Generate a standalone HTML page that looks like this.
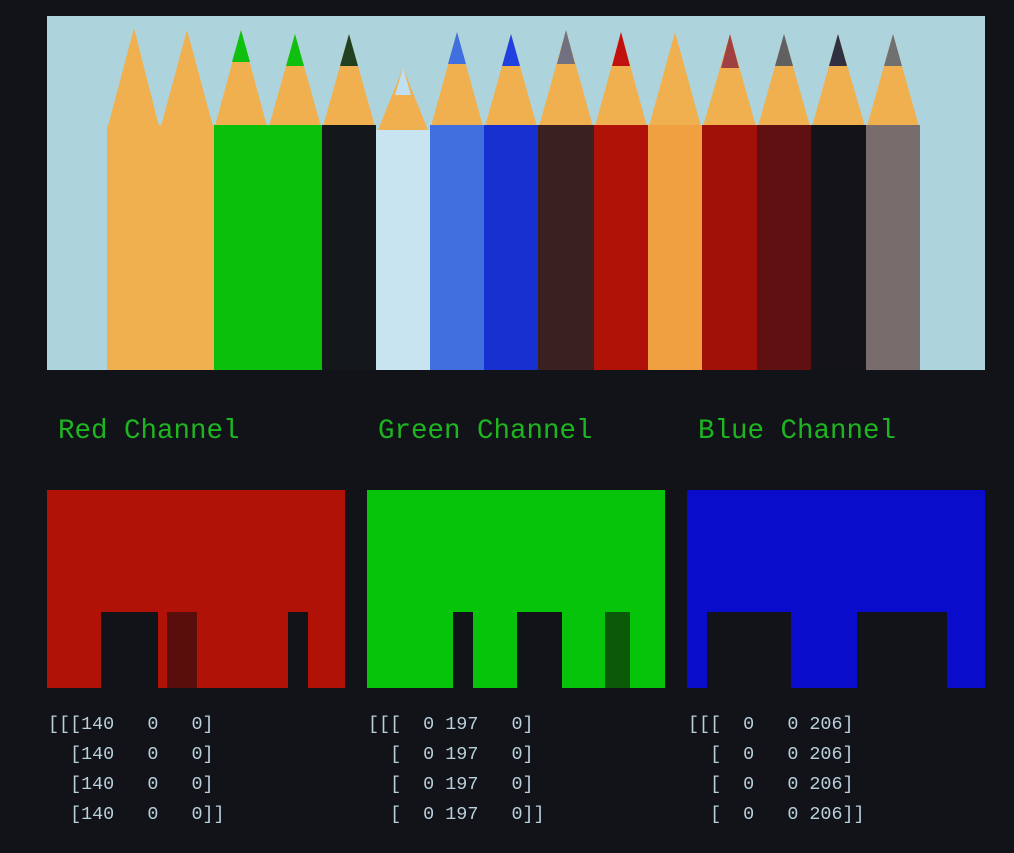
<!DOCTYPE html>
<html><head><style>
body{margin:0;background:#121318;width:1014px;height:853px;overflow:hidden;position:relative;font-family:"Liberation Mono",monospace}
.t{position:absolute;top:412px;color:#1db520;font-size:27.5px;line-height:40px;white-space:pre}
.a{position:absolute;top:710px;color:#b8d0dc;font-size:18.4px;line-height:30px;white-space:pre}
</style></head><body>
<svg style="position:absolute;left:0;top:0" width="1014" height="853">
<rect x="47" y="16" width="938" height="354" fill="#add4dd"/>
<g>
<polygon points="107,130 160,130 134,28" fill="#f0b050"/><rect x="107" y="125" width="53" height="245" fill="#f0b050"/>
<polygon points="160,130 214,130 187,30" fill="#f0b050"/><rect x="160" y="125" width="54" height="245" fill="#f0b050"/>
<polygon points="214,130 268,130 241,30" fill="#f0b050"/><polygon points="232,62 250,62 241,30" fill="#10c010"/><rect x="214" y="125" width="54" height="245" fill="#0ac00a"/>
<polygon points="268,130 322,130 295,34" fill="#f0b050"/><polygon points="286,66 304,66 295,34" fill="#10c010"/><rect x="268" y="125" width="54" height="245" fill="#0ac00a"/>
<polygon points="322,130 376,130 349,34" fill="#f0b050"/><polygon points="340,66 358,66 349,34" fill="#204020"/><rect x="322" y="125" width="54" height="245" fill="#15181a"/>
<polygon points="376,135 430,135 403,68" fill="#f0b050"/><polygon points="395,95 411,95 403,68" fill="#c0e0f0"/><rect x="376" y="130" width="54" height="240" fill="#c8e4f0"/>
<polygon points="430,130 484,130 457,32" fill="#f0b050"/><polygon points="448,64 466,64 457,32" fill="#4070e0"/><rect x="430" y="125" width="54" height="245" fill="#4070e0"/>
<polygon points="484,130 538,130 511,34" fill="#f0b050"/><polygon points="502,66 520,66 511,34" fill="#2040e0"/><rect x="484" y="125" width="54" height="245" fill="#1830d0"/>
<polygon points="538,130 594,130 566,30" fill="#f0b050"/><polygon points="557,64 575,64 566,30" fill="#707080"/><rect x="538" y="125" width="56" height="245" fill="#3a2020"/>
<polygon points="594,130 648,130 621,32" fill="#f0b050"/><polygon points="612,66 630,66 621,32" fill="#c01010"/><rect x="594" y="125" width="54" height="245" fill="#b01208"/>
<polygon points="648,130 702,130 675,32" fill="#f0b050"/><rect x="648" y="125" width="54" height="245" fill="#f0a040"/>
<polygon points="702,130 757,130 730,34" fill="#f0b050"/><polygon points="721,68 739,68 730,34" fill="#a04040"/><rect x="702" y="125" width="55" height="245" fill="#a01208"/>
<polygon points="757,130 811,130 784,34" fill="#f0b050"/><polygon points="775,66 793,66 784,34" fill="#606060"/><rect x="757" y="125" width="54" height="245" fill="#601010"/>
<polygon points="811,130 866,130 838,34" fill="#f0b050"/><polygon points="829,66 847,66 838,34" fill="#303040"/><rect x="811" y="125" width="55" height="245" fill="#141418"/>
<polygon points="866,130 920,130 893,34" fill="#f0b050"/><polygon points="884,66 902,66 893,34" fill="#707070"/><rect x="866" y="125" width="54" height="245" fill="#786c6c"/>
</g>
<rect x="47" y="490" width="298" height="198" fill="#b01208"/>
<rect x="101" y="612" width="57" height="76" fill="#121318"/>
<rect x="167" y="612" width="30" height="76" fill="#5a0e0c"/>
<rect x="288" y="612" width="20" height="76" fill="#121318"/>
<rect x="367" y="490" width="298" height="198" fill="#06c40a"/>
<rect x="453" y="612" width="20" height="76" fill="#121318"/>
<rect x="517" y="612" width="45" height="76" fill="#121318"/>
<rect x="605" y="612" width="25" height="76" fill="#0a5a0a"/>
<rect x="687" y="490" width="298" height="198" fill="#0a0ccc"/>
<rect x="707" y="612" width="84" height="76" fill="#121318"/>
<rect x="857" y="612" width="90" height="76" fill="#121318"/>
</svg>
<div class="t" style="left:58px">Red Channel</div>
<div class="t" style="left:378px">Green Channel</div>
<div class="t" style="left:698px">Blue Channel</div>
<div class="a" style="left:48px">[[[140   0   0]
  [140   0   0]
  [140   0   0]
  [140   0   0]]</div>
<div class="a" style="left:368px">[[[  0 197   0]
  [  0 197   0]
  [  0 197   0]
  [  0 197   0]]</div>
<div class="a" style="left:688px">[[[  0   0 206]
  [  0   0 206]
  [  0   0 206]
  [  0   0 206]]</div>
</body></html>
